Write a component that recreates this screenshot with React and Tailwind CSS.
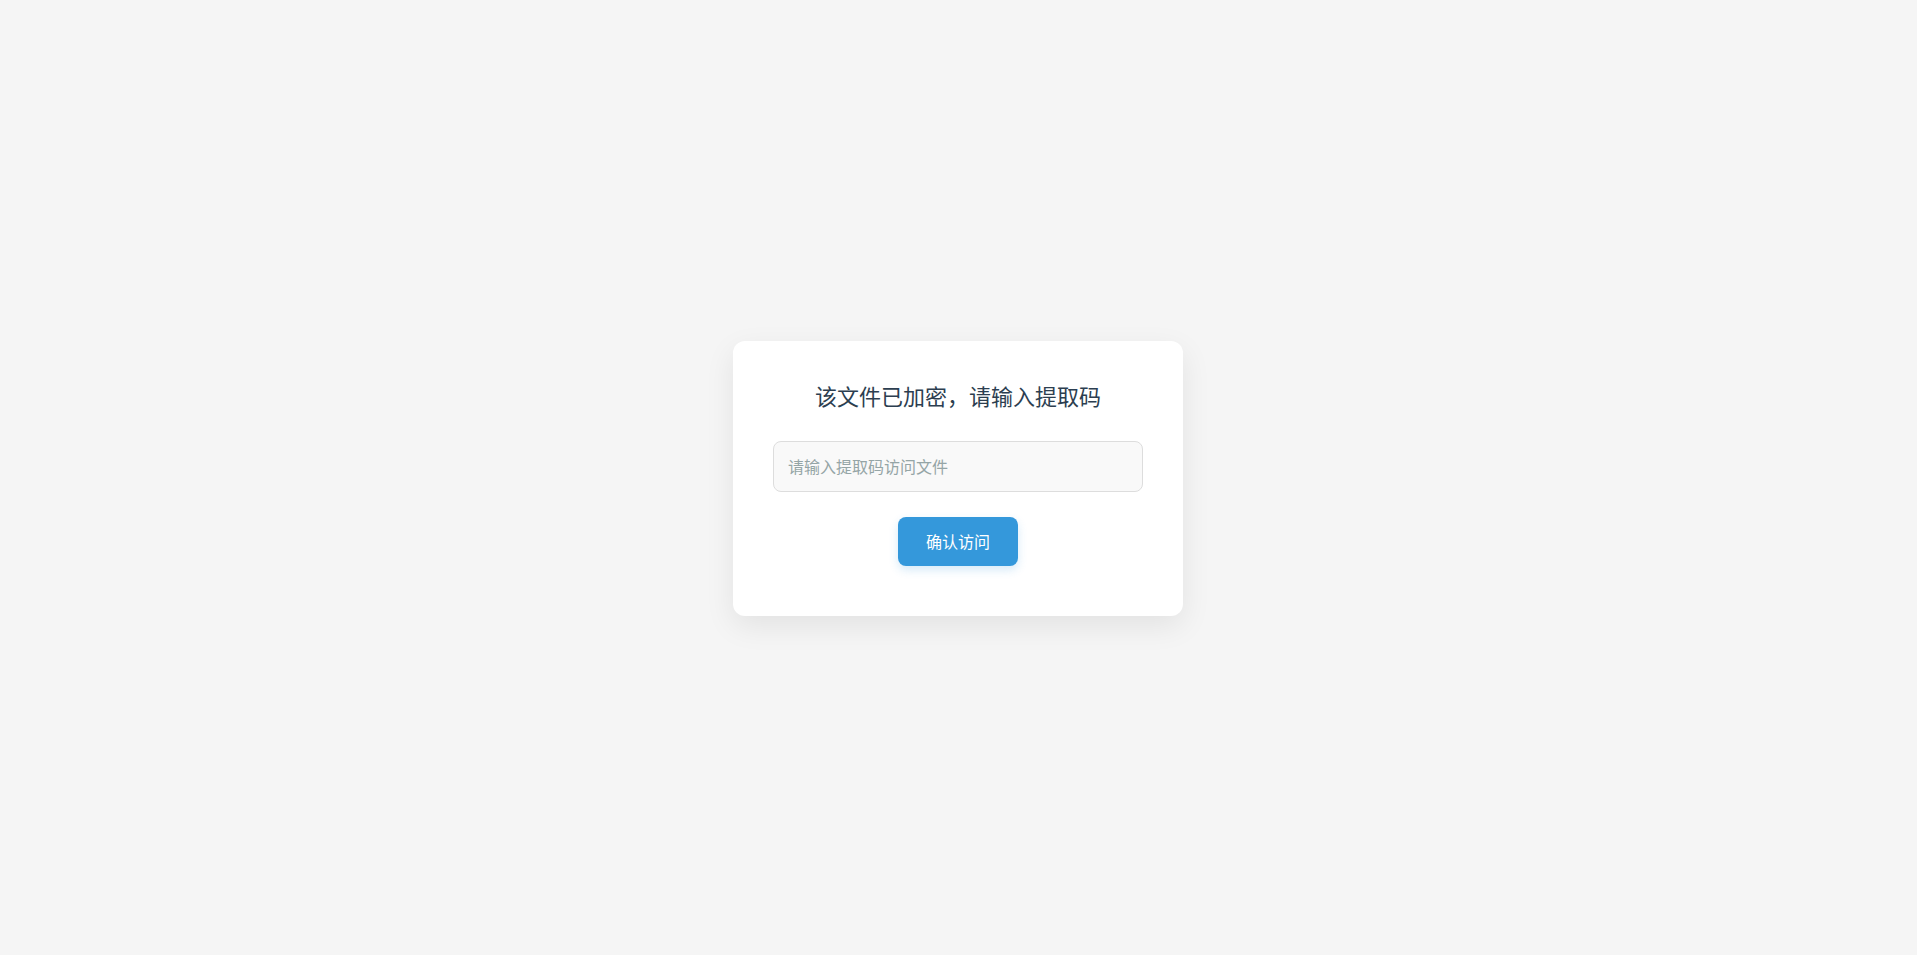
import React, { useState } from 'react';

export default function App() {
  const [code, setCode] = useState('');

  const handleSubmit = (e) => {
    e.preventDefault();
  };

  return (
    <main className="flex min-h-screen items-center justify-center bg-[#f5f5f5] pt-0.5 pr-px font-['Noto_Sans_CJK_SC',sans-serif]">
      <form
        onSubmit={handleSubmit}
        className="flex w-full max-w-[450px] flex-col items-center rounded-xl bg-white px-10 pt-10 pb-[50px] shadow-[0_10px_30px_rgba(0,0,0,0.08)]"
      >
        <h1 className="mb-8 text-[22px] leading-7 font-normal text-[#2c3e50]">
          <label htmlFor="code">该文件已加密，请输入提取码</label>
        </h1>
        <input
          id="code"
          type="text"
          value={code}
          onChange={(e) => setCode(e.target.value)}
          placeholder="请输入提取码访问文件"
          className="mb-[25px] h-[51px] w-full rounded-lg border border-[#dddddd] bg-[#f9f9f9] px-3.5 pb-0.5 text-base text-[#2c3e50] outline-none placeholder:text-[#95a5a6] focus:border-[#3498db]"
        />
        <button
          type="submit"
          className="h-[49px] cursor-pointer rounded-lg bg-[#3498db] px-7 pb-0.5 text-base text-white shadow-[0_4px_10px_rgba(52,152,219,0.2)] hover:bg-[#2980b9]"
        >
          确认访问
        </button>
      </form>
    </main>
  );
}
